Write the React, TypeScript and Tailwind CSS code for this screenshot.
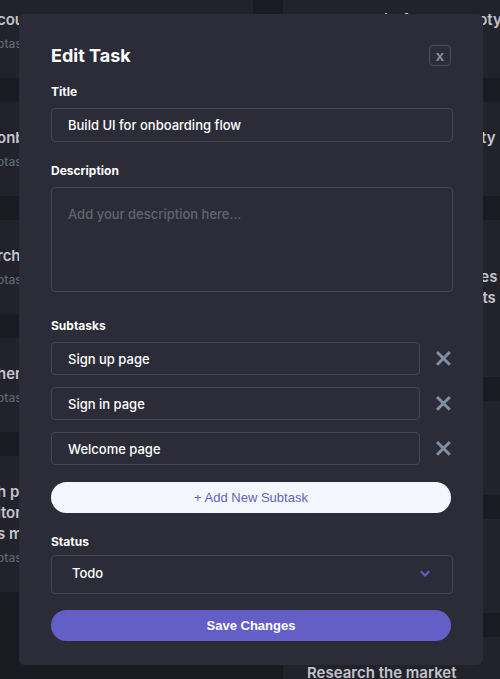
import React from "react";

const Cross = () => (
  <svg width="15" height="15" viewBox="0 0 15 15" xmlns="http://www.w3.org/2000/svg">
    <g fill="#828FA3" fillRule="evenodd">
      <path d="m12.728 0 2.122 2.122L2.122 14.85 0 12.728z" />
      <path d="M0 2.122 2.122 0 14.85 12.728l-2.122 2.122z" />
    </g>
  </svg>
);

const Chevron = () => (
  <svg width="10" height="7" viewBox="0 0 10 7" xmlns="http://www.w3.org/2000/svg">
    <path stroke="#635FC7" strokeWidth="2" fill="none" d="m.799 1.277 4.23 4.23 4.23-4.23" />
  </svg>
);

function BgCard({ lines, sub }: { lines: string[]; sub: string }) {
  return (
    <div className="rounded-[8px] bg-[#21222c] px-6 pt-[25px] pb-[26px]">
      <div className="text-[15px] font-semibold leading-[21px] text-[#c4c4c8] whitespace-nowrap">
        {lines.map((l, i) => (
          <div key={i}>{l}</div>
        ))}
      </div>
      <div className="mt-[6px] text-[12px] font-medium leading-[16px] text-[#5f6674] whitespace-nowrap">{sub}</div>
    </div>
  );
}

const labelCls = "text-[12px] font-bold leading-[16px] text-white";
const fieldCls =
  "w-full rounded-[4px] border border-[#43464f] bg-transparent px-4 text-[13px] font-medium text-white outline-none";

export default function App() {
  return (
    <div className="relative h-[679px] w-[500px] overflow-hidden bg-[#1a1a22] font-[Inter,sans-serif]">
      <div className="-ml-[27px] -mt-[16px] flex gap-[30px]">
        <div className="flex w-[280px] shrink-0 flex-col gap-6">
          <BgCard lines={["count management"]} sub="btasks" />
          <BgCard lines={["onboarding flow"]} sub="otasks" />
          <BgCard lines={["rch pricing points"]} sub="otasks" />
          <BgCard lines={["her results"]} sub="otasks" />
          <BgCard lines={["h pricing", "itors", "s model"]} sub="otasks" />
        </div>
        <div className="flex w-[280px] shrink-0 flex-col gap-6">
          <BgCard lines={["Create a wireframe prototypes"]} sub="0 of 3 subtasks" />
          <BgCard lines={["Add filter & sort capability"]} sub="0 of 2 subtasks" />
          <BgCard
            lines={["Review results of", "usability tests and iterates", "Share all results in reports", "Review"]}
            sub="1 of 3 subtasks"
          />
          <BgCard lines={["Build settings UI"]} sub="2 of 3 subtasks" />
          <BgCard lines={["Competitor analysis"]} sub="1 of 2 subtasks" />
          <BgCard lines={["Research the market"]} sub="0 of 2 subtasks" />
        </div>
      </div>

      <div className="absolute left-[19px] top-[14px] w-[464px] rounded-[6px] bg-[#2b2c37] pl-8 pr-[30px] pt-[30px] pb-6">
        <div className="flex h-[22px] items-center justify-between pr-[2px]">
          <h2 className="text-[18px] font-bold leading-[23px] text-white">Edit Task</h2>
          <button className="flex h-[21px] w-[22px] items-center justify-center rounded-[4px] border border-[#4b4e5e] font-['Liberation_Sans',Arial,sans-serif] text-[15px] font-bold leading-none text-[#828fa3]">
            x
          </button>
        </div>

        <div className={`mt-[18px] ${labelCls}`}>Title</div>
        <input className={`mt-2 h-[34px] ${fieldCls}`} defaultValue="Build UI for onboarding flow" />

        <div className={`mt-[21px] ${labelCls}`}>Description</div>
        <textarea
          className={`mt-2 block h-[105px] resize-none py-4 leading-[20px] placeholder:text-[#62646f] ${fieldCls}`}
          placeholder="Add your description here..."
        />

        <div className={`mt-[26px] ${labelCls}`}>Subtasks</div>
        <div className="mt-2 flex w-[400px] flex-col gap-3">
          {["Sign up page", "Sign in page", "Welcome page"].map((s) => (
            <div key={s} className="flex items-center gap-4">
              <input className={`h-[33px] flex-1 ${fieldCls}`} defaultValue={s} />
              <Cross />
            </div>
          ))}
        </div>

        <button className="mt-[17px] flex h-[31px] w-[400px] items-center justify-center rounded-full bg-[#f4f7fd] font-['Liberation_Sans',Arial,sans-serif] text-[13px] text-[#635fc7]">
          + Add New Subtask
        </button>

        <div className={`mt-[21px] ${labelCls}`}>Status</div>
        <div className="mt-[5px] flex h-[39px] w-full items-center justify-between rounded-[4px] border border-[#43464f] pb-[3px] pl-5 pr-[22px]">
          <span className="text-[13px] font-medium leading-[16px] text-white">Todo</span>
          <Chevron />
        </div>

        <button className="mt-4 flex h-[31px] w-[400px] items-center justify-center rounded-full bg-[#635fc7] font-['Liberation_Sans',Arial,sans-serif] text-[13px] font-bold text-white">
          Save Changes
        </button>
      </div>
    </div>
  );
}
